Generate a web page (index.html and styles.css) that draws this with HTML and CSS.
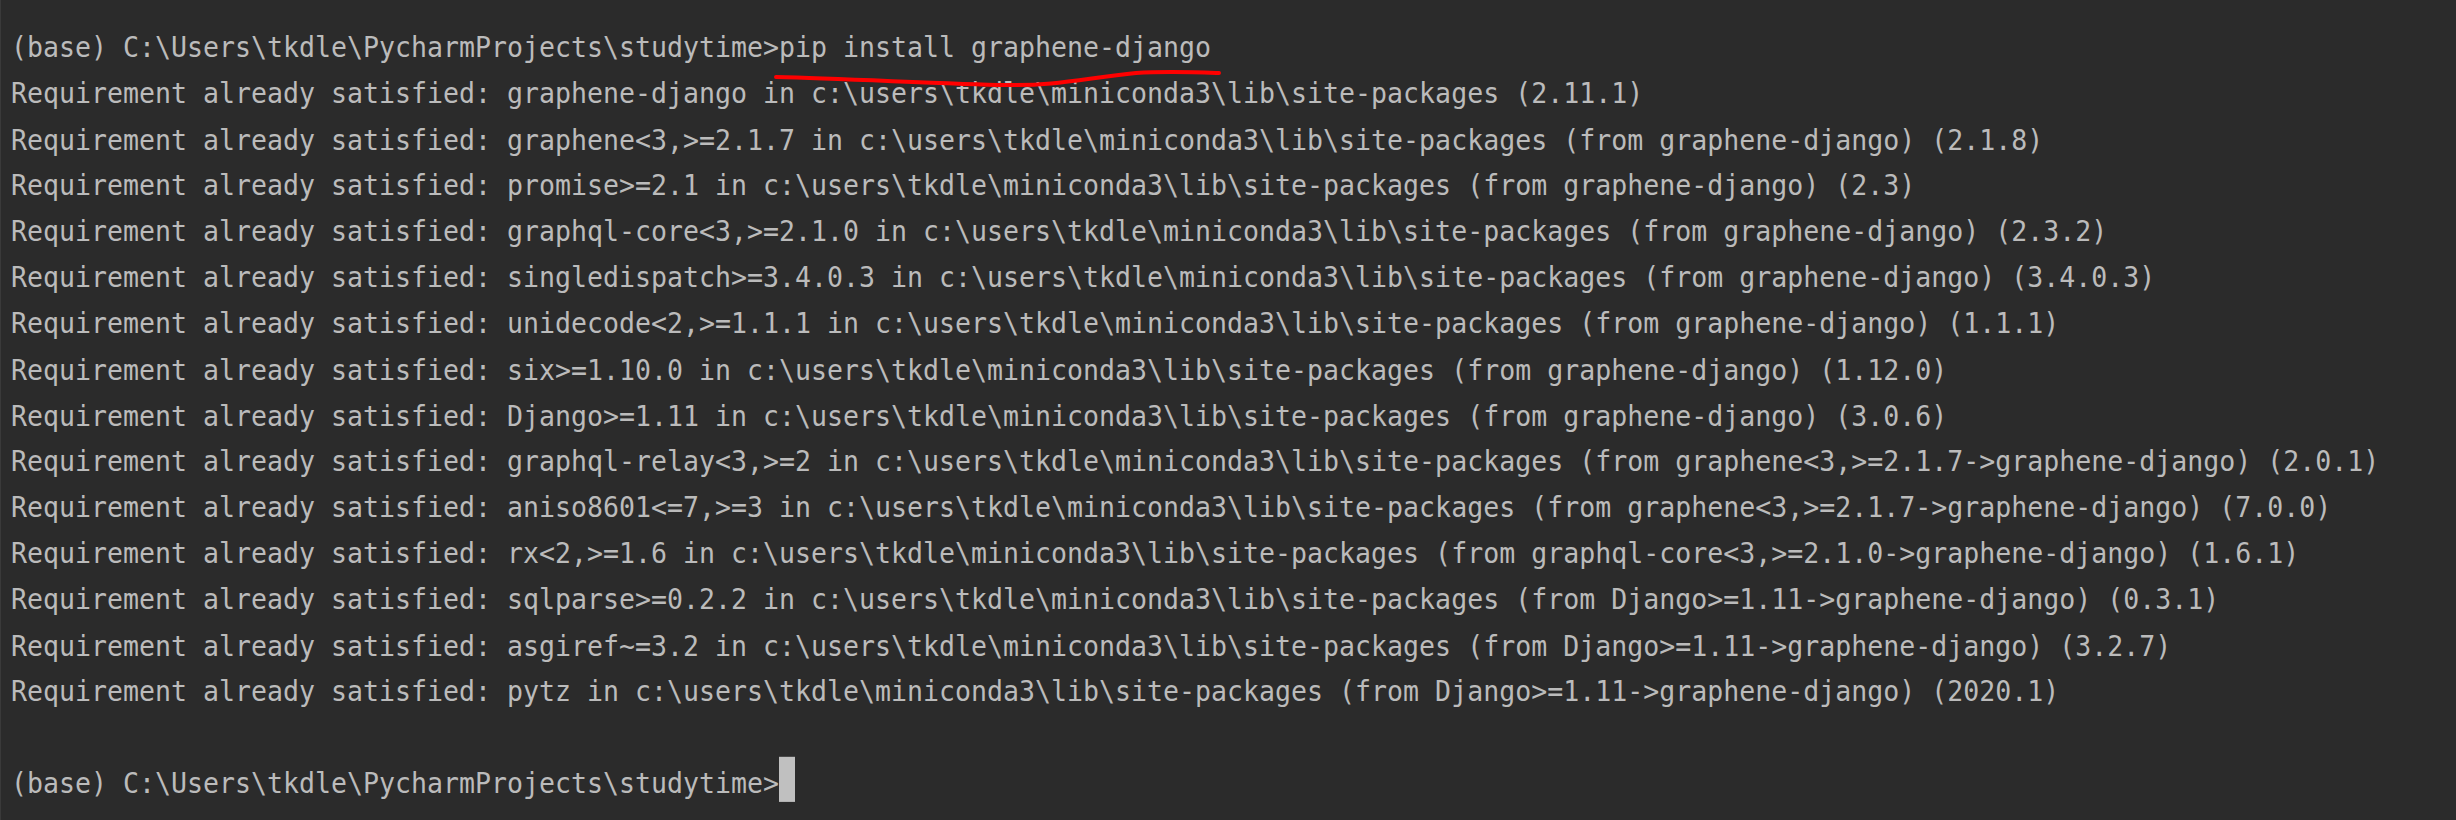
FILE: index.html
```html
<!DOCTYPE html>
<html>
<head>
<meta charset="utf-8">
<link rel="stylesheet" href="styles.css">
</head>
<body>
<div class="terminal">
  <div class="output">
    <div class="line">(base) C:\Users\tkdle\PycharmProjects\studytime&gt;pip install graphene-django</div>
    <div class="line">Requirement already satisfied: graphene-django in c:\users\tkdle\miniconda3\lib\site-packages (2.11.1)</div>
    <div class="line">Requirement already satisfied: graphene&lt;3,&gt;=2.1.7 in c:\users\tkdle\miniconda3\lib\site-packages (from graphene-django) (2.1.8)</div>
    <div class="line">Requirement already satisfied: promise&gt;=2.1 in c:\users\tkdle\miniconda3\lib\site-packages (from graphene-django) (2.3)</div>
    <div class="line">Requirement already satisfied: graphql-core&lt;3,&gt;=2.1.0 in c:\users\tkdle\miniconda3\lib\site-packages (from graphene-django) (2.3.2)</div>
    <div class="line">Requirement already satisfied: singledispatch&gt;=3.4.0.3 in c:\users\tkdle\miniconda3\lib\site-packages (from graphene-django) (3.4.0.3)</div>
    <div class="line">Requirement already satisfied: unidecode&lt;2,&gt;=1.1.1 in c:\users\tkdle\miniconda3\lib\site-packages (from graphene-django) (1.1.1)</div>
    <div class="line">Requirement already satisfied: six&gt;=1.10.0 in c:\users\tkdle\miniconda3\lib\site-packages (from graphene-django) (1.12.0)</div>
    <div class="line">Requirement already satisfied: Django&gt;=1.11 in c:\users\tkdle\miniconda3\lib\site-packages (from graphene-django) (3.0.6)</div>
    <div class="line">Requirement already satisfied: graphql-relay&lt;3,&gt;=2 in c:\users\tkdle\miniconda3\lib\site-packages (from graphene&lt;3,&gt;=2.1.7-&gt;graphene-django) (2.0.1)</div>
    <div class="line">Requirement already satisfied: aniso8601&lt;=7,&gt;=3 in c:\users\tkdle\miniconda3\lib\site-packages (from graphene&lt;3,&gt;=2.1.7-&gt;graphene-django) (7.0.0)</div>
    <div class="line">Requirement already satisfied: rx&lt;2,&gt;=1.6 in c:\users\tkdle\miniconda3\lib\site-packages (from graphql-core&lt;3,&gt;=2.1.0-&gt;graphene-django) (1.6.1)</div>
    <div class="line">Requirement already satisfied: sqlparse&gt;=0.2.2 in c:\users\tkdle\miniconda3\lib\site-packages (from Django&gt;=1.11-&gt;graphene-django) (0.3.1)</div>
    <div class="line">Requirement already satisfied: asgiref~=3.2 in c:\users\tkdle\miniconda3\lib\site-packages (from Django&gt;=1.11-&gt;graphene-django) (3.2.7)</div>
    <div class="line">Requirement already satisfied: pytz in c:\users\tkdle\miniconda3\lib\site-packages (from Django&gt;=1.11-&gt;graphene-django) (2020.1)</div>
    <div class="line"> </div>
    <div class="line">(base) C:\Users\tkdle\PycharmProjects\studytime&gt;<span class="cursor"></span></div>
  </div>
  <svg class="mark" width="2456" height="820" viewBox="0 0 2456 820">
    <path d="M775 77 C 850 79, 950 84, 1005 85 C 1055 86, 1085 78, 1135 73 C 1165 71, 1190 72, 1218 73" fill="none" stroke="#ff0000" stroke-width="4" stroke-linecap="round"/>
  </svg>
</div>
</body>
</html>
```

FILE: styles.css
```css
html, body {
  margin: 0;
  padding: 0;
  background: #2b2b2b;
}
.terminal {
  position: relative;
  width: 2456px;
  height: 820px;
  overflow: hidden;
  background: #2b2b2b;
  box-sizing: border-box;
  border-left: 1px solid #3a3a3a;
}
.output {
  padding: 22px 0 0 10px;
  font-family: "DejaVu Sans Mono", monospace;
  font-size: 26.58px;
  color: #bbbbbb;
  line-height: 41.82px;
  transform: scaleY(1.1);
  transform-origin: 0 0;
}
.line {
  height: 41.82px;
  white-space: pre;
}
.cursor {
  display: inline-block;
  width: 16px;
  height: 41.82px;
  vertical-align: top;
  background: #c0c0c0;
  margin-top: -3.5px;
}
.mark {
  position: absolute;
  left: 0;
  top: 0;
  pointer-events: none;
}
```
